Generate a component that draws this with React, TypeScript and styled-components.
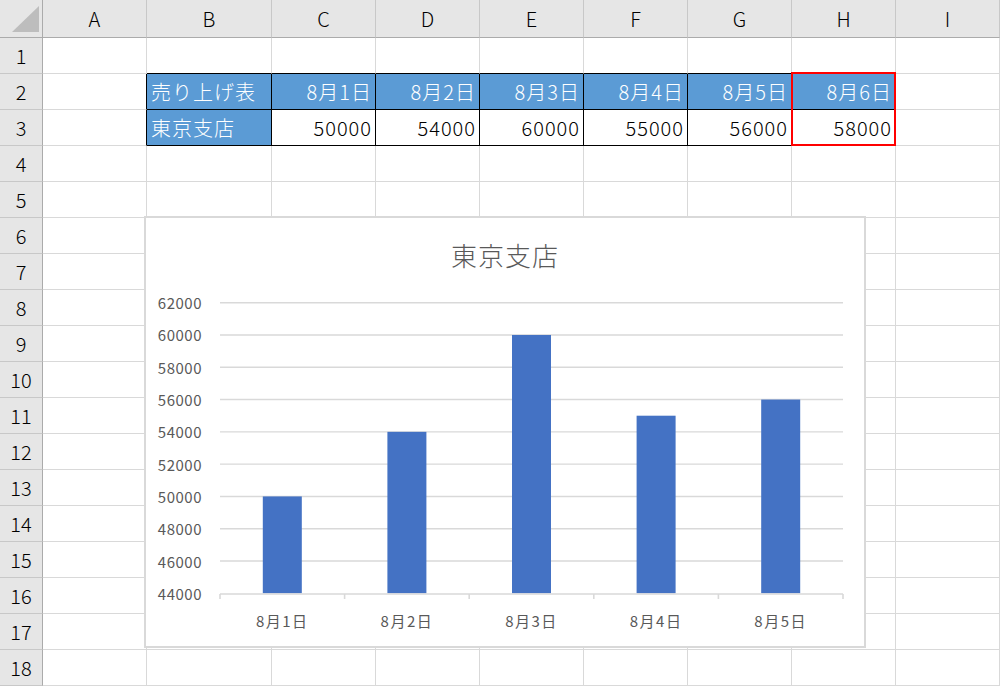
import React from 'react';
import styled, { createGlobalStyle } from 'styled-components';

const GlobalStyle = createGlobalStyle`
  html, body {
    margin: 0;
    padding: 0;
    background: #ffffff;
  }
  body {
    font-family: "Noto Sans CJK JP", "Noto Sans", sans-serif;
  }
`;

const COLS = ['A', 'B', 'C', 'D', 'E', 'F', 'G', 'H', 'I'];
const ROWS = 18;
const BLUE = '#5b9bd5';
const GRID = '#d9d9d9';

const Sheet = styled.div`
  position: relative;
  width: 1000px;
  height: 686px;
  overflow: hidden;
  display: grid;
  grid-template-columns: 43px 104px 125px repeat(6, 104px) 1fr;
  grid-template-rows: 38px repeat(${ROWS}, 36px);
`;

const Corner = styled.div`
  background: #e6e6e6;
  border-right: 1px solid #ababab;
  border-bottom: 1px solid #ababab;
  box-sizing: border-box;
  display: flex;
  align-items: flex-end;
  justify-content: flex-end;
  padding: 0 2px 4px 0;
`;

const ColHead = styled.div`
  background: #e6e6e6;
  border-right: 1px solid #c8c8c8;
  border-bottom: 1px solid #ababab;
  box-sizing: border-box;
  display: flex;
  align-items: center;
  justify-content: center;
  font-size: 20px;
  font-weight: 300;
  color: #000;
`;

const RowHead = styled.div`
  background: #e6e6e6;
  border-right: 1px solid #ababab;
  border-bottom: 1px solid #c8c8c8;
  box-sizing: border-box;
  display: flex;
  align-items: center;
  justify-content: center;
  font-size: 20px;
  font-weight: 300;
  color: #000;
`;

type CellProps = {
  $fill?: string;
  $right: string;
  $bottom: string;
  $align: 'left' | 'right';
  $light?: boolean;
};

const Cell = styled.div<CellProps>`
  box-sizing: border-box;
  background: ${({ $fill }) => $fill ?? '#ffffff'};
  border-right: 1px solid ${({ $right }) => $right};
  border-bottom: 1px solid ${({ $bottom }) => $bottom};
  display: flex;
  align-items: center;
  justify-content: ${({ $align }) => ($align === 'right' ? 'flex-end' : 'flex-start')};
  padding: 0 3px 0 4px;
  font-size: 20px;
  font-weight: 300;
  letter-spacing: 1px;
  white-space: nowrap;
  color: ${({ $light }) => ($light ? '#ffffff' : '#000000')};
`;

const Selection = styled.div`
  position: absolute;
  left: 791px;
  top: 72px;
  width: 105px;
  height: 74px;
  box-sizing: border-box;
  border: 2px solid #ff0000;
  pointer-events: none;
`;

const ChartBox = styled.div`
  position: absolute;
  left: 144px;
  top: 216px;
  width: 722px;
  height: 432px;
  box-sizing: border-box;
  border: 2px solid #d9d9d9;
  background: #ffffff;
  display: flex;
  flex-direction: column;
`;

const ChartTitle = styled.div`
  height: 72px;
  display: flex;
  align-items: center;
  justify-content: center;
  font-size: 26px;
  font-weight: 300;
  color: #595959;
  letter-spacing: 1px;
`;

const Plot = styled.svg`
  display: block;
  width: 718px;
  height: 356px;
  font-family: "Noto Sans CJK JP", "Noto Sans", sans-serif;
`;

const header = ['売り上げ表', '8月1日', '8月2日', '8月3日', '8月4日', '8月5日', '8月6日'];
const values = [50000, 54000, 60000, 55000, 56000, 58000];

const cellText = (row: number, col: number) => {
  if (col < 1 || col > 7) return '';
  if (row === 2) return header[col - 1];
  if (row === 3) return col === 1 ? '東京支店' : String(values[col - 2]);
  return '';
};

const inTable = (row: number, col: number) => row >= 2 && row <= 3 && col >= 1 && col <= 7;

const PLOT_LEFT = 74;
const PLOT_RIGHT = 697;
const AXIS_Y = 303.3;
const STEP = 32.29;
const yOf = (v: number) => AXIS_Y - ((v - 44000) / 2000) * STEP;

const ColumnChart: React.FC = () => {
  const ticks = [62000, 60000, 58000, 56000, 54000, 52000, 50000, 48000, 46000, 44000];
  const data = values.slice(0, 5);
  const catW = (PLOT_RIGHT - PLOT_LEFT) / data.length;
  return (
    <Plot viewBox="0 0 718 356">
      {ticks.map((t) => (
        <g key={t}>
          {t !== 44000 && (
            <line x1={PLOT_LEFT} x2={PLOT_RIGHT} y1={yOf(t)} y2={yOf(t)} stroke={GRID} strokeWidth={1.4} />
          )}
          <text
            x={56}
            y={yOf(t)}
            textAnchor="end"
            dominantBaseline="central"
            fontSize={15}
            letterSpacing={0.5}
            fill="#595959"
          >
            {t}
          </text>
        </g>
      ))}
      {data.map((v, i) => {
        const cx = PLOT_LEFT + catW * (i + 0.5);
        return (
          <g key={i}>
            <rect x={cx - 19.5} y={yOf(v)} width={39} height={AXIS_Y - yOf(v)} fill="#4472c4" />
            <text
              x={cx}
              y={330}
              textAnchor="middle"
              dominantBaseline="central"
              fontSize={15}
              letterSpacing={1.5}
              fill="#595959"
            >
              {header[i + 1]}
            </text>
          </g>
        );
      })}
      <line x1={PLOT_LEFT} x2={PLOT_RIGHT} y1={304} y2={304} stroke={GRID} strokeWidth={1.6} />
      {Array.from({ length: data.length + 1 }, (_, i) => {
        const x = PLOT_LEFT + catW * i;
        return <line key={i} x1={x} x2={x} y1={304} y2={309} stroke={GRID} strokeWidth={1.6} />;
      })}
    </Plot>
  );
};

const CornerMark = () => (
  <svg width="30" height="28" viewBox="0 0 30 28">
    <polygon points="29,1 29,27 2,27" fill="#bdbdbd" />
  </svg>
);

export default function App() {
  const cells: React.ReactNode[] = [];
  cells.push(
    <Corner key="corner">
      <CornerMark />
    </Corner>
  );
  COLS.forEach((c) => cells.push(<ColHead key={`h${c}`}>{c}</ColHead>));
  for (let r = 1; r <= ROWS; r++) {
    cells.push(<RowHead key={`r${r}`}>{r}</RowHead>);
    COLS.forEach((_, ci) => {
      const table = inTable(r, ci);
      const right = table || inTable(r, ci + 1) ? '#000000' : GRID;
      const bottom = table || inTable(r + 1, ci) ? '#000000' : GRID;
      const blue = table && (r === 2 || ci === 1);
      cells.push(
        <Cell
          key={`c${r}-${ci}`}
          $fill={blue ? BLUE : undefined}
          $light={blue}
          $right={right}
          $bottom={bottom}
          $align={ci === 1 ? 'left' : 'right'}
        >
          {cellText(r, ci)}
        </Cell>
      );
    });
  }

  return (
    <>
      <GlobalStyle />
      <Sheet>
        {cells}
        <Selection />
        <ChartBox>
          <ChartTitle>東京支店</ChartTitle>
          <ColumnChart />
        </ChartBox>
      </Sheet>
    </>
  );
}
